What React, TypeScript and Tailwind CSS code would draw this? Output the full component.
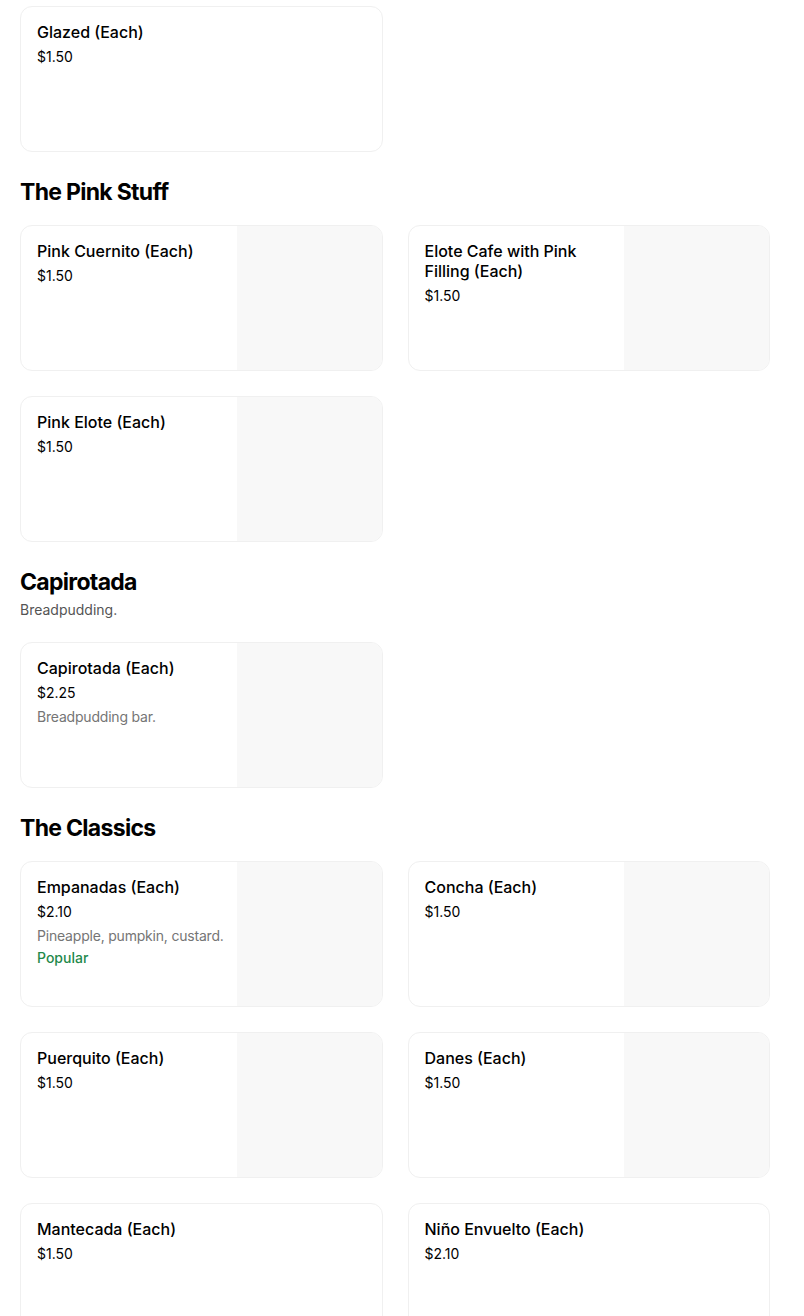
type Item = { name: string; price: string; desc?: string; popular?: boolean; img?: boolean };
type Section = { title?: string; sub?: string; items: Item[] };

const sections: Section[] = [
  { items: [{ name: "Glazed (Each)", price: "$1.50" }] },
  {
    title: "The Pink Stuff",
    items: [
      { name: "Pink Cuernito (Each)", price: "$1.50", img: true },
      { name: "Elote Cafe with Pink Filling (Each)", price: "$1.50", img: true },
      { name: "Pink Elote (Each)", price: "$1.50", img: true },
    ],
  },
  {
    title: "Capirotada",
    sub: "Breadpudding.",
    items: [{ name: "Capirotada (Each)", price: "$2.25", desc: "Breadpudding bar.", img: true }],
  },
  {
    title: "The Classics",
    items: [
      { name: "Empanadas (Each)", price: "$2.10", desc: "Pineapple, pumpkin, custard.", popular: true, img: true },
      { name: "Concha (Each)", price: "$1.50", img: true },
      { name: "Puerquito (Each)", price: "$1.50", img: true },
      { name: "Danes (Each)", price: "$1.50", img: true },
      { name: "Mantecada (Each)", price: "$1.50" },
      { name: "Niño Envuelto (Each)", price: "$2.10" },
    ],
  },
];

function Card({ item }: { item: Item }) {
  return (
    <div className="flex h-[146px] overflow-hidden rounded-xl border border-[#f0f0f0] bg-white">
      <div className="flex-1 pl-4 pr-1 pt-[15px]">
        <div className="pr-2 text-[16px] leading-5 font-medium text-black">{item.name}</div>
        <div className="mt-[5px] text-[14px] leading-5 text-black">{item.price}</div>
        {item.desc && (
          <div className="mt-1 text-[14px] leading-5 tracking-[-0.2px] whitespace-nowrap text-[#757575]">{item.desc}</div>
        )}
        {item.popular && <div className="mt-[2px] text-[14px] leading-5 font-medium text-[#1f8a4c]">Popular</div>}
      </div>
      {item.img && <div className="w-[145px] shrink-0 bg-[#f8f8f8]" />}
    </div>
  );
}

export default function App() {
  return (
    <div className="min-h-screen bg-white px-5 pt-[6px]" style={{ fontFamily: "Inter, 'Liberation Sans', sans-serif" }}>
      <div className="w-[750px]">
        {sections.map((s, i) => (
          <div key={i} className={i > 0 ? "mt-6" : ""}>
            {s.title && (
              <div className="mb-[17px]">
                <h2 className="text-[23px] leading-8 font-bold tracking-[-0.7px] text-black">{s.title}</h2>
                {s.sub && <div className="mt-[2px] pb-[5px] text-[14px] leading-5 text-[#545454]">{s.sub}</div>}
              </div>
            )}
            <div className="grid grid-cols-2 gap-x-[25px] gap-y-[25px]">
              {s.items.map((it) => (
                <Card key={it.name} item={it} />
              ))}
            </div>
          </div>
        ))}
      </div>
    </div>
  );
}
